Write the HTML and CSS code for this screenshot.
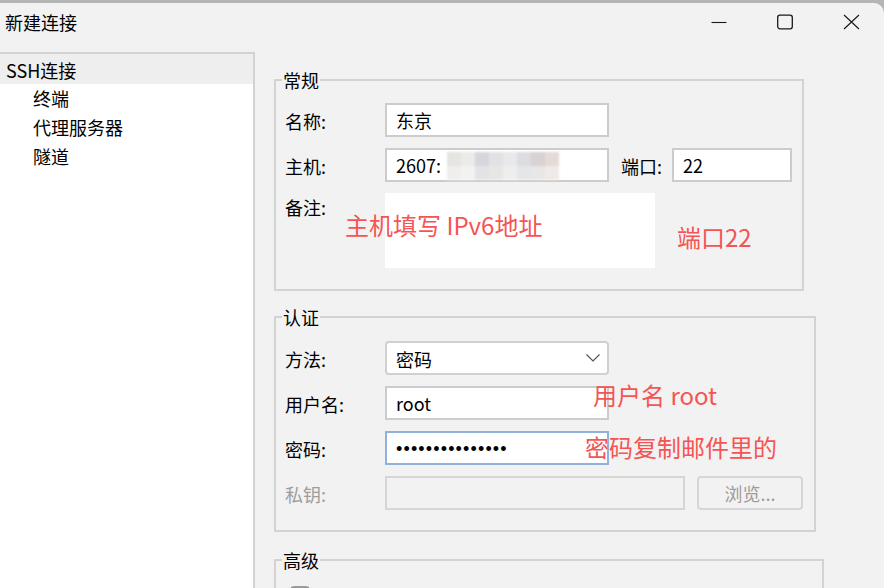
FILE: index.html
```html
<!DOCTYPE html>
<html lang="zh-CN">
<head>
<meta charset="utf-8">
<title>新建连接</title>
<link rel="stylesheet" href="styles.css">
</head>
<body>
<div class="strip"></div>
<div class="window">
  <div class="titlebar">
    <div class="title">新建连接</div>
    <div class="controls">
      <div class="ctl"><svg width="16" height="16" viewBox="0 0 16 16"><path d="M0.5 8.5h15" stroke="#1a1a1a" stroke-width="1.1" fill="none"/></svg></div>
      <div class="ctl"><svg width="16" height="16" viewBox="0 0 16 16"><rect x="0.7" y="1.2" width="14.6" height="13.6" rx="2.2" stroke="#1a1a1a" stroke-width="1.3" fill="none"/></svg></div>
      <div class="ctl"><svg width="17" height="16" viewBox="0 0 17 16"><path d="M1 1l15 14M16 1L1 15" stroke="#1a1a1a" stroke-width="1.2" fill="none"/></svg></div>
    </div>
  </div>
  <div class="main">
    <div class="tree">
      <div class="node sel">SSH连接</div>
      <div class="node child">终端</div>
      <div class="node child">代理服务器</div>
      <div class="node child">隧道</div>
    </div>
    <div class="pane">
      <fieldset class="group g1">
        <legend>常规</legend>
        <div class="rows">
          <div class="row">
            <span class="lbl">名称:</span>
            <div class="field w224">东京</div>
          </div>
          <div class="row">
            <span class="lbl">主机:</span>
            <div class="field w224 host">2607:<div class="mask">
                <i style="background:#e6e4e1"></i><i style="background:#ecebea"></i><i style="background:#d6d6dc"></i><i style="background:#e2e2e5"></i><i style="background:#e9e9ea"></i><i style="background:#dcdde0"></i><i style="background:#d8d2d2"></i><i style="background:#e4dbd7"></i>
                <i style="background:#efeeed"></i><i style="background:#f2f2f2"></i><i style="background:#e3e3e6"></i><i style="background:#e8e6e3"></i><i style="background:#eeeeef"></i><i style="background:#e5e6e8"></i><i style="background:#e9e6e6"></i><i style="background:#efeae7"></i>
              </div></div>
            <span class="lbl-port">端口:</span>
            <div class="field port">22</div>
          </div>
          <div class="row top">
            <span class="lbl lbl-note">备注:</span>
            <div class="note"></div>
          </div>
        </div>
      </fieldset>

      <fieldset class="group g2">
        <legend>认证</legend>
        <div class="rows">
          <div class="row">
            <span class="lbl">方法:</span>
            <div class="select w224"><span>密码</span><svg width="14" height="8" viewBox="0 0 14 8"><path d="M0.5 0.5L7 7l6.5-6.5" stroke="#555" stroke-width="1.2" fill="none"/></svg></div>
          </div>
          <div class="row">
            <span class="lbl">用户名:</span>
            <div class="field w224">root</div>
          </div>
          <div class="row">
            <span class="lbl">密码:</span>
            <div class="field w224 focus"><span class="dots">•••••••••••••••</span></div>
          </div>
          <div class="row">
            <span class="lbl disabled">私钥:</span>
            <div class="field key"></div>
            <div class="btn">浏览...</div>
          </div>
        </div>
      </fieldset>

      <fieldset class="group g3">
        <legend>高级</legend>
        <div class="check"></div>
      </fieldset>

      <div class="anno a1">主机填写 IPv6地址</div>
      <div class="anno a2">端口22</div>
      <div class="anno a3">用户名 root</div>
      <div class="anno a4">密码复制邮件里的</div>
    </div>
  </div>
</div>
</body>
</html>
```

FILE: styles.css
```css
* { box-sizing: border-box; }
html, body { margin: 0; padding: 0; }
body {
  width: 884px;
  height: 588px;
  overflow: hidden;
  background: #b5b5b5;
  font-family: "Noto Sans CJK SC", "Noto Sans", sans-serif;
  font-size: 18px;
  color: #000;
}
.strip { height: 3px; }
.window {
  height: 585px;
  background: #f2f2f2;
  border-top-right-radius: 10px;
  display: flex;
  flex-direction: column;
}
.titlebar {
  height: 49px;
  flex: none;
  display: flex;
  justify-content: space-between;
  align-items: flex-start;
}
.title { padding-left: 5px; line-height: 38px; }
.controls { display: flex; }
.ctl {
  width: 66px;
  height: 38px;
  display: flex;
  align-items: center;
  justify-content: center;
}
.main { flex: 1; display: flex; min-height: 0; }
.tree {
  width: 255px;
  flex: none;
  background: #fff;
  border-top: 2px solid #d2d2d2;
  border-right: 2px solid #d2d2d2;
}
.node {
  height: 29px;
  line-height: 29px;
  padding-left: 6px;
  white-space: nowrap;
}
.node.sel {
  height: 30px;
  padding-top: 3px;
  line-height: 27px;
  background: #eeeeee;
}
.node.child { padding-left: 33px; }

.pane {
  position: relative;
  flex: 1;
  padding: 16px 0 0 19px;
  display: flex;
  flex-direction: column;
  align-items: flex-start;
}
.group {
  margin: 0;
  min-width: 0;
  border: 2px solid #d3d3d3;
  padding: 0 0 0 9px;
}
.group legend {
  padding: 0 1px;
  margin-left: -3px;
  line-height: 24px;
  font-size: 18px;
}
.g1 { width: 530px; padding-top: 11px; padding-bottom: 21px; }
.g2 { width: 542px; margin-top: 14px; padding-top: 12px; padding-bottom: 20px; }
.g3 { width: 550px; margin-top: 16px; padding-top: 14px; height: 60px; }

.rows { display: flex; flex-direction: column; gap: 11px; }
.row { display: flex; align-items: center; }
.row.top { align-items: flex-start; }
.lbl {
  width: 100px;
  flex: none;
  line-height: 24px;
  padding-top: 1px;
  white-space: nowrap;
}
.lbl-note { line-height: 28px; padding-top: 0; }
.lbl.disabled { color: #9d9d9d; }
.lbl-port {
  width: 51px;
  margin-left: 12px;
  line-height: 24px;
  padding-top: 1px;
  flex: none;
}
.field {
  height: 34px;
  border: 2px solid #cccccc;
  background: #fff;
  padding: 1px 9px 0;
  line-height: 28px;
  white-space: nowrap;
  flex: none;
}
.w224 { width: 224px; }
.port { width: 120px; }
.host { position: relative; }
.mask {
  position: absolute;
  left: 60px;
  top: 2px;
  width: 112px;
  height: 28px;
  display: grid;
  grid-template-columns: repeat(8, 1fr);
  grid-template-rows: 14px 14px;
  filter: blur(1.2px);
  border-top-right-radius: 10px;
}
.mask i { display: block; }
.note {
  width: 270px;
  height: 75px;
  background: #fff;
}
.select {
  height: 34px;
  border: 2px solid #d0d0d0;
  border-radius: 4px;
  background: #fff;
  display: flex;
  justify-content: space-between;
  align-items: center;
  padding: 1px 7px 0 9px;
  line-height: 28px;
}
.select svg { margin-top: -1px; }
.focus { border-color: #8fb3dd; }
.dots {
  font-family: "Liberation Sans", sans-serif;
  font-size: 18px;
  letter-spacing: 1.15px;
  position: relative;
  top: -1px;
}
.key { width: 300px; background: #f2f2f2; border-color: #d6d6d6; }
.btn {
  width: 106px;
  height: 34px;
  margin-left: 12px;
  border: 2px solid #d6d6d6;
  border-radius: 4px;
  color: #9d9d9d;
  text-align: center;
  padding-top: 1px;
  line-height: 28px;
  flex: none;
}
.check {
  width: 20px;
  height: 20px;
  margin-left: 5px;
  border: 2px solid #9a9a9a;
  border-radius: 4px;
  background: #ececec;
}

.anno {
  position: absolute;
  font-size: 24px;
  line-height: 24px;
  color: #f55454;
  white-space: nowrap;
}
.a1 { left: 90px; top: 161px; }
.a2 { left: 422px; top: 173px; }
.a3 { left: 338px; top: 331px; }
.a4 { left: 330px; top: 383px; }
```
